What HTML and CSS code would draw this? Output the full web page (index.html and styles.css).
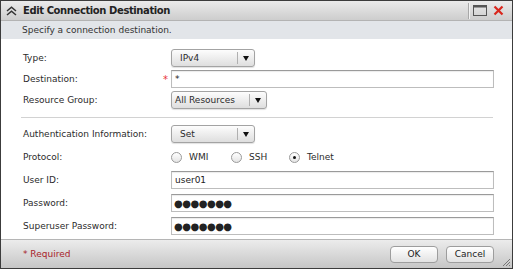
FILE: index.html
```html
<!DOCTYPE html>
<html lang="en">
<head>
    <meta charset="UTF-8">
    <title>Edit Connection Destination</title>
    <link rel="stylesheet" href="styles.css">
</head>
<body>

    <div class="dialog">
        <div class="titlebar">
            <svg class="collapse-icon" width="11" height="10" viewBox="0 0 11 10">
                <path d="M1 5 L5.5 1.2 L10 5" fill="none" stroke="#333" stroke-width="1.5"/>
                <path d="M1 9 L5.5 5.2 L10 9" fill="none" stroke="#333" stroke-width="1.5"/>
            </svg>
            <span class="title">Edit Connection Destination</span>
            <div class="tools">
                <span class="tool-sep"></span>
                <svg class="tool-max" width="14" height="11" viewBox="0 0 14 11">
                    <rect x="0.5" y="0.5" width="13" height="10" fill="none" stroke="#555"/>
                    <rect x="0" y="0" width="14" height="2.5" fill="#555"/>
                </svg>
                <svg class="tool-close" width="11" height="11" viewBox="0 0 11 11">
                    <path d="M1.5 1.5 L9.5 9.5 M9.5 1.5 L1.5 9.5" stroke="#d9261c" stroke-width="2.2"/>
                </svg>
            </div>
        </div>

        <div class="desc">Specify a connection destination.</div>

        <form class="content">
            <div class="group group-top">
                <div class="row">
                    <label>Type:</label>
                    <div class="select sel-type"><span class="sel-text">IPv4</span><span class="sel-arrow"></span></div>
                </div>
                <div class="row">
                    <label>Destination: <span class="req">*</span></label>
                    <input type="text" class="field" value="*">
                </div>
                <div class="row">
                    <label>Resource Group:</label>
                    <div class="select sel-group"><span class="sel-text">All Resources</span><span class="sel-arrow"></span></div>
                </div>
            </div>

            <div class="sep"></div>

            <div class="group group-bottom">
                <div class="row">
                    <label>Authentication Information:</label>
                    <div class="select sel-type"><span class="sel-text">Set</span><span class="sel-arrow"></span></div>
                </div>
                <div class="row">
                    <label>Protocol:</label>
                    <div class="radios">
                        <span class="radio"><span class="radio-dot"></span>WMI</span>
                        <span class="radio"><span class="radio-dot"></span>SSH</span>
                        <span class="radio"><span class="radio-dot checked"></span>Telnet</span>
                    </div>
                </div>
                <div class="row">
                    <label>User ID:</label>
                    <input type="text" class="field" value="user01">
                </div>
                <div class="row">
                    <label>Password:</label>
                    <input type="text" class="field masked" value="●●●●●●●" readonly>
                </div>
                <div class="row">
                    <label>Superuser Password:</label>
                    <input type="text" class="field masked" value="●●●●●●●" readonly>
                </div>
            </div>
        </form>

        <div class="footer">
            <span class="required">* Required</span>
            <button type="button" class="btn">OK</button>
            <button type="button" class="btn">Cancel</button>
        </div>

        <svg class="grip" width="10" height="10" viewBox="0 0 10 10">
            <path d="M9 2 L2 9 M9 5 L5 9 M9 8 L8 9" stroke="#777" stroke-width="1"/>
        </svg>
    </div>

</body>
</html>
```

FILE: styles.css
```css
/* Page */
body {
    margin: 0;
    background: #fff;
}

/* Dialog frame */
.dialog {
    position: relative;
    width: 513px;
    height: 269px;
    box-sizing: border-box;
    border: 1px solid #3c3c3c;
    display: flex;
    flex-direction: column;
    background: #fff;
    font-family: "DejaVu Sans", Verdana, sans-serif;
    font-size: 9px;
    color: #2b2b2b;
}

/* Title bar */
.titlebar {
    height: 19px;
    border-bottom: 1px solid #b3b3b3;
    background: linear-gradient(#ebebeb, #cdcdcd);
    display: flex;
    align-items: center;
    padding: 0 8px 0 5px;
}

.title {
    margin-left: 6px;
    font-size: 10px;
    font-weight: bold;
    letter-spacing: -0.4px;
    color: #222;
}

.tools {
    margin-left: auto;
    display: flex;
    align-items: center;
}

.tool-sep {
    width: 1px;
    height: 16px;
    background: #a8a8a8;
    border-right: 1px solid #f2f2f2;
    margin-right: 3px;
}

.tool-close {
    margin-left: 6px;
}

/* Description strip */
.desc {
    height: 18px;
    background: #e2e5e9;
    padding-left: 21px;
    display: flex;
    align-items: center;
    color: #333;
}

/* Form area */
.content {
    flex: 1;
    margin: 0;
    padding-top: 10px;
    box-sizing: border-box;
}

.group {
    display: flex;
    flex-direction: column;
}

.group-top {
    gap: 3px;
}

.group-bottom {
    gap: 5px;
}

.row {
    display: grid;
    grid-template-columns: 148px 1fr;
    align-items: center;
    height: 18px;
    padding: 0 18px 0 22px;
}

.row label {
    display: flex;
    justify-content: space-between;
    padding-right: 3px;
}

.req {
    color: #e8343a;
    font-size: 10px;
}

.sep {
    height: 1px;
    background: #d2d2d2;
    margin: 8px 19px 7px 20px;
}

/* Text fields */
.field {
    height: 18px;
    box-sizing: border-box;
    margin: 0;
    padding: 0 3px;
    border: 1px solid #bdbdbd;
    border-top-color: #9a9a9a;
    box-shadow: inset 0 1px 1px rgba(0, 0, 0, 0.08);
    font-family: "DejaVu Sans", Verdana, sans-serif;
    font-size: 9px;
    color: #222;
    background: #fff;
}

.masked {
    font-size: 10px;
    letter-spacing: -0.5px;
    padding-left: 2px;
}

/* Drop-down buttons */
.select {
    height: 18px;
    box-sizing: border-box;
    display: flex;
    align-items: center;
    border: 1px solid #a3a3a3;
    border-radius: 3px;
    background: linear-gradient(#fdfdfd, #dedede);
    box-shadow: 0 1px 1px rgba(0, 0, 0, 0.12);
}

.sel-type {
    width: 84px;
}

.sel-group {
    width: 96px;
}

.sel-text {
    flex: 1;
    padding-left: 8px;
}

.sel-group .sel-text {
    padding-left: 3px;
}

.sel-arrow {
    width: 16px;
    height: 12px;
    border-left: 1px solid #b0b0b0;
    position: relative;
}

.sel-arrow::after {
    content: "";
    position: absolute;
    left: 5px;
    top: 4px;
    border-left: 3.5px solid transparent;
    border-right: 3.5px solid transparent;
    border-top: 5px solid #111;
}

/* Radio buttons */
.radios {
    display: flex;
    align-items: center;
}

.radio {
    display: inline-flex;
    align-items: center;
    gap: 7px;
    width: 60px;
}

.radio:nth-child(2) {
    width: 58px;
}

.radio-dot {
    width: 11px;
    height: 11px;
    box-sizing: border-box;
    border: 1px solid #9a9a9a;
    border-radius: 50%;
    background: linear-gradient(#fff, #e4e4e4);
    position: relative;
}

.radio-dot.checked::after {
    content: "";
    position: absolute;
    left: 3px;
    top: 3px;
    width: 3px;
    height: 3px;
    border-radius: 50%;
    background: #111;
}

/* Footer */
.footer {
    height: 28px;
    border-top: 1px solid #b5b5b5;
    background: linear-gradient(#ececec, #c6c6c6);
    display: flex;
    align-items: center;
    gap: 8px;
    padding: 0 18px 0 22px;
}

.required {
    color: #a8232a;
    margin-right: auto;
}

.btn {
    width: 48px;
    height: 17px;
    padding: 0;
    border: 1px solid #9d9d9d;
    border-radius: 4px;
    background: linear-gradient(#ffffff, #e2e2e2);
    font-family: "DejaVu Sans", Verdana, sans-serif;
    font-size: 9px;
    color: #222;
}

/* Resize grip overlays the corner */
.grip {
    position: absolute;
    right: 1px;
    bottom: 1px;
}
```
